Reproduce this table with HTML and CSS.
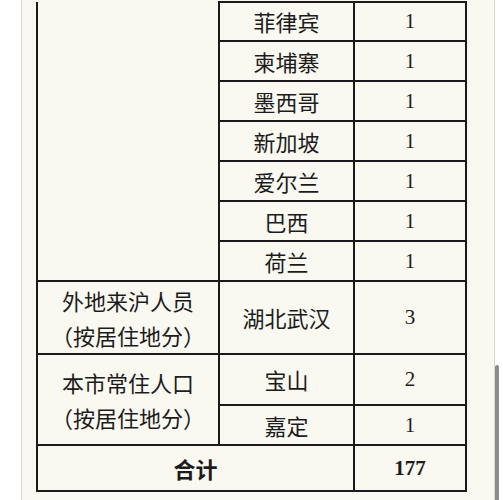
FILE: index.html
```html
<!DOCTYPE html>
<html lang="zh">
<head>
<meta charset="utf-8">
<link rel="stylesheet" href="styles.css">
</head>
<body>
<div class="panel">
  <table class="stats">
    <colgroup>
      <col class="c1"><col class="c2"><col class="c3">
    </colgroup>
    <tbody>
      <tr class="r40 first">
        <td class="group top" rowspan="7"></td>
        <td class="place">菲律宾</td>
        <td class="num">1</td>
      </tr>
      <tr class="r40"><td class="place">柬埔寨</td><td class="num">1</td></tr>
      <tr class="r40"><td class="place">墨西哥</td><td class="num">1</td></tr>
      <tr class="r40"><td class="place">新加坡</td><td class="num">1</td></tr>
      <tr class="r40"><td class="place">爱尔兰</td><td class="num">1</td></tr>
      <tr class="r40"><td class="place">巴西</td><td class="num">1</td></tr>
      <tr class="r40"><td class="place">荷兰</td><td class="num">1</td></tr>
      <tr class="r73">
        <td class="group">外地来沪人员<br>（按居住地分）</td>
        <td class="place">湖北武汉</td>
        <td class="num">3</td>
      </tr>
      <tr class="r51">
        <td class="group" rowspan="2">本市常住人口<br>（按居住地分）</td>
        <td class="place">宝山</td>
        <td class="num">2</td>
      </tr>
      <tr class="r40"><td class="place">嘉定</td><td class="num">1</td></tr>
      <tr class="r46 total">
        <td class="label" colspan="2">合计</td>
        <td class="num bold">177</td>
      </tr>
    </tbody>
  </table>
</div>
<div class="scroll-thumb"></div>
</body>
</html>
```

FILE: styles.css
```css
html, body {
  margin: 0;
  padding: 0;
  background: #ffffff;
  height: 500px;
  overflow: hidden;
}

body {
  position: relative;
}

.panel {
  margin-left: 21px;
  width: 458px;
  height: 500px;
  border-left: 1px solid #d9d9d6;
  border-right: 1px solid #d9d9d6;
  background: #f9f8f1;
  padding-left: 14px;
  padding-top: 1px;
  box-sizing: content-box;
}

.stats {
  border-collapse: collapse;
  table-layout: fixed;
  width: 429px;
  color: #1c1c1c;
}

.c1 { width: 182px; }
.c2 { width: 135px; }
.c3 { width: 112px; }

.stats td {
  border: 2px solid #1a1a1a;
  padding: 0;
  text-align: center;
  vertical-align: middle;
}

.stats td.top {
  border-top: none;
}

.place, .group, .label {
  font-family: "Noto Sans CJK SC", "Noto Sans", sans-serif;
  font-size: 22px;
  line-height: 35px;
}

.num {
  font-family: "Liberation Serif", "Times New Roman", serif;
  font-size: 21px;
}

.bold, .label {
  font-weight: bold;
}

.r40 { height: 40px; }
.first { height: 39px; }
.r73 { height: 73px; }
.r51 { height: 51px; }
.r46 { height: 46px; }

.scroll-thumb {
  position: absolute;
  left: 495px;
  top: 365px;
  width: 4px;
  height: 140px;
  border-radius: 2px;
  background: #8c8c8c;
}
```
